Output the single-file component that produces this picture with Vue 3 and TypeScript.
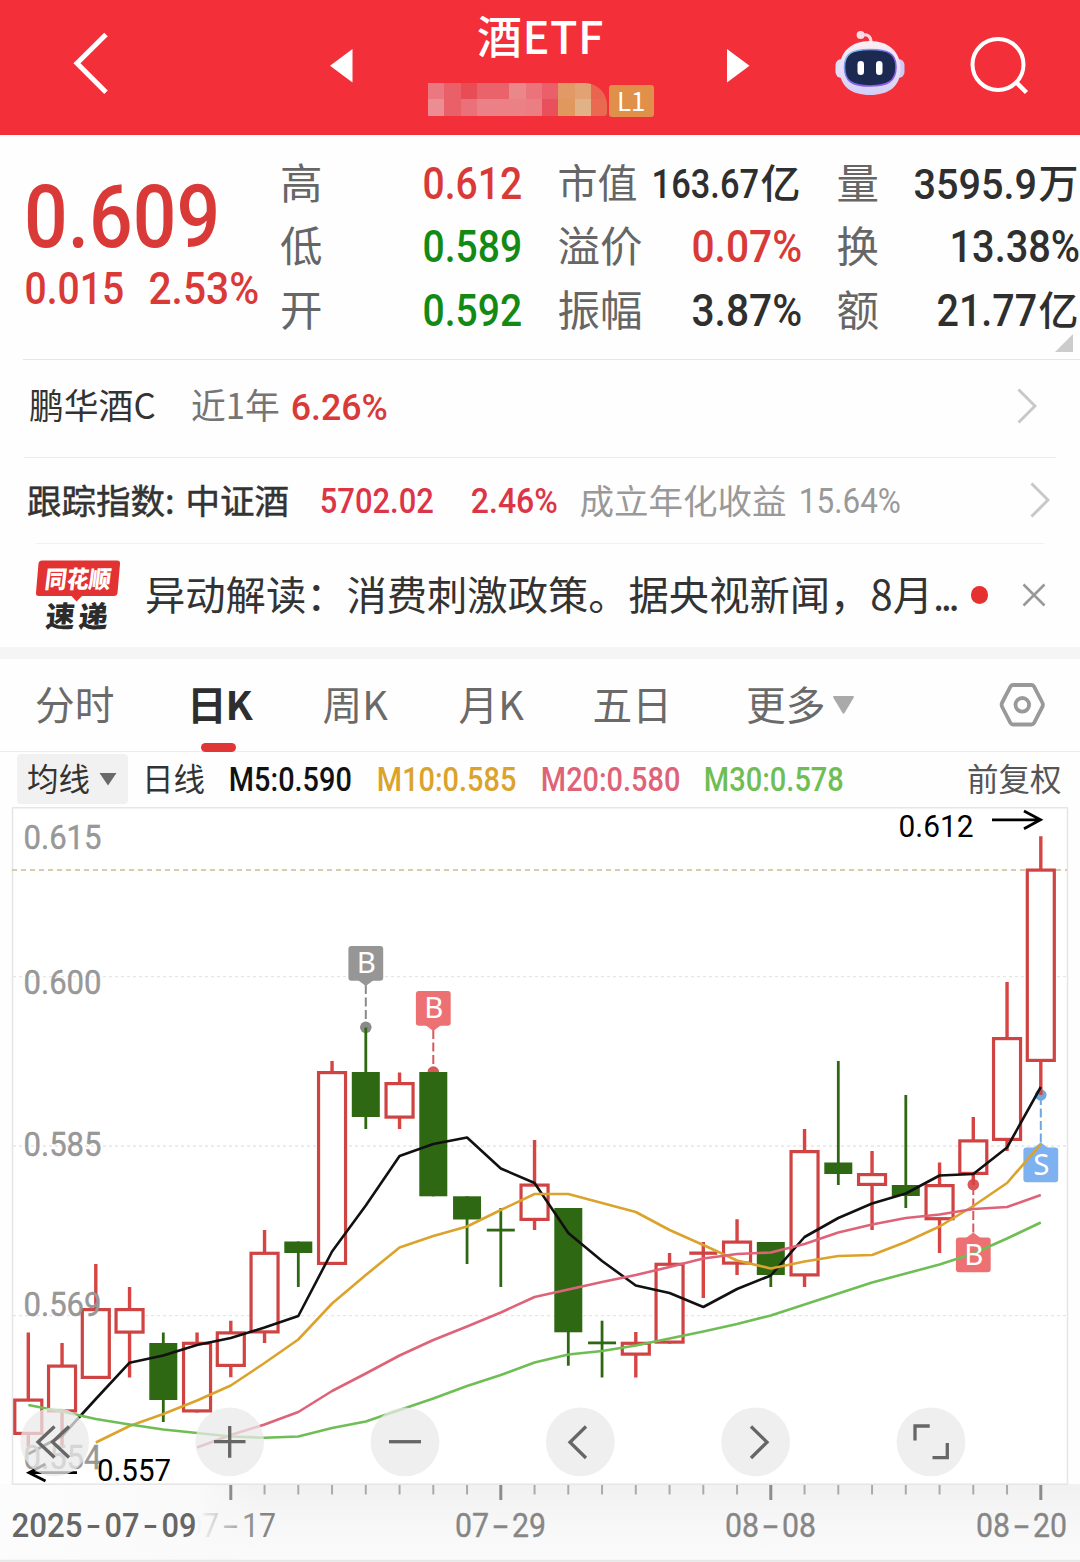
<script setup lang="ts">
import { h } from 'vue'

interface FitProps {
  t: string
  w: number
  s: number
  weight?: number
}

// Condensed numeric text: stretched to the given ink width, as tall as its digits.
const Num = (p: FitProps) =>
  h(
    'svg',
    {
      width: p.w,
      height: p.s * 0.711,
      style: { overflow: 'visible', display: 'block', flex: 'none', fill: 'currentColor' },
    },
    [
      h(
        'text',
        {
          x: -p.s * 0.035,
          y: p.s * 0.711,
          'font-family': 'Roboto, sans-serif',
          'font-size': p.s,
          'font-weight': p.weight ?? 500,
          textLength: p.w + p.s * 0.06,
          lengthAdjust: 'spacingAndGlyphs',
        },
        p.t,
      ),
    ],
  )
Num.props = ['t', 'w', 's', 'weight']

interface Cell {
  label: string
  value: string
  w: number
  s: number
  unit?: string
  tone: string
}

const columns: { name: string; cells: Cell[] }[] = [
  {
    name: 'c1',
    cells: [
      { label: '高', value: '0.612', w: 97, s: 44, tone: 'red' },
      { label: '低', value: '0.589', w: 97, s: 44, tone: 'green' },
      { label: '开', value: '0.592', w: 97, s: 44, tone: 'green' },
    ],
  },
  {
    name: 'c2',
    cells: [
      { label: '市值', value: '163.67', w: 105, s: 41, unit: '亿', tone: 'dark' },
      { label: '溢价', value: '0.07%', w: 108, s: 44, tone: 'red' },
      { label: '振幅', value: '3.87%', w: 108, s: 44, tone: 'dark' },
    ],
  },
  {
    name: 'c3',
    cells: [
      { label: '量', value: '3595.9', w: 121, s: 43, unit: '万', tone: 'dark' },
      { label: '换', value: '13.38%', w: 128, s: 44, tone: 'dark' },
      { label: '额', value: '21.77', w: 98, s: 44, unit: '亿', tone: 'dark' },
    ],
  },
]

const mosaic: string[] = [
  '#eb7780', '#ea6068', '#e84c54', '#ea626a', '#ea626a', '#eb868a', '#ea747a', '#ea5f69', '#e19a66', '#e2a274', '#e96550',
  '#eb8d92', '#ea6069', '#ea707a', '#eb8087', '#eb8085', '#eb8085', '#eb7e83', '#ea4f5c', '#e1985f', '#e2b287', '#e96a50',
]

const X0 = 28.3
const STEP = 33.75
const cx = (i: number): number => X0 + i * STEP

// [rising, high, top, bottom, low]
type Candle = [boolean, number, number, number, number]
const candles: Candle[] = [
  [true, 1332.5, 1398.5, 1435, 1447],
  [true, 1343, 1364.5, 1412.5, 1445],
  [true, 1264, 1308, 1379, 1379],
  [true, 1287, 1308, 1333.7, 1377.5],
  [false, 1332.5, 1343, 1400, 1422],
  [true, 1332.5, 1341.7, 1412.5, 1412.5],
  [true, 1320.7, 1331.3, 1367, 1377.3],
  [true, 1230, 1251.7, 1333.5, 1343],
  [false, 1241.5, 1241.5, 1253, 1287],
  [true, 1061, 1071, 1265, 1265],
  [false, 1027.5, 1072, 1117, 1129],
  [true, 1072.5, 1082, 1118.7, 1129],
  [false, 1072, 1072, 1196.3, 1196.3],
  [false, 1196.3, 1196.3, 1219.5, 1264],
  [false, 1208, 1228.7, 1231.5, 1287],
  [true, 1140, 1183.5, 1221, 1230],
  [false, 1208, 1208, 1332.3, 1365.7],
  [false, 1320.7, 1341.5, 1344.3, 1377.5],
  [true, 1332, 1341.7, 1355.7, 1377.5],
  [true, 1253, 1262.7, 1343.7, 1343.7],
  [true, 1242, 1251.5, 1254.8, 1298],
  [true, 1219.3, 1240.5, 1264.7, 1275],
  [false, 1242, 1242, 1275, 1287],
  [true, 1129, 1150, 1276.5, 1287],
  [false, 1061, 1162.5, 1174, 1185],
  [true, 1151, 1173, 1186, 1230],
  [false, 1095, 1185, 1196, 1208],
  [true, 1162.5, 1184, 1220.3, 1253],
  [true, 1117, 1139.3, 1175, 1185],
  [true, 982, 1037, 1141, 1151],
  [true, 836.3, 868.5, 1062, 1095],
]

const line = (start: number, ys: number[]): string => ys.map((y, k) => `${cx(start + k)},${y}`).join(' ')

const averages: { color: string; points: string }[] = [
  {
    color: '#111',
    points: line(0, [1454, 1436, 1399, 1362.7, 1355.5, 1345, 1338, 1327.5, 1316, 1251.5, 1205.5, 1156, 1144, 1137.5, 1168.5, 1183, 1233, 1261, 1285.5, 1293, 1307, 1289, 1275.5, 1237, 1218, 1203.5, 1193.5, 1175.5, 1174, 1147.5, 1087]),
  },
  {
    color: '#dba32c',
    points: line(2, [1442.5, 1426, 1414, 1400.5, 1385.5, 1363, 1339.5, 1303.5, 1275, 1247.5, 1236, 1226.5, 1210, 1194, 1194, 1203, 1212, 1230, 1245, 1260.5, 1268.5, 1261.5, 1256, 1255, 1242, 1226.5, 1206, 1183, 1144]),
  },
  {
    color: '#de6378',
    points: line(5, [1447.5, 1435, 1424.5, 1412, 1391, 1373.5, 1355.5, 1340, 1326.5, 1312.5, 1297, 1289.5, 1282, 1275, 1267, 1258.5, 1254, 1252.5, 1244, 1232.5, 1224.5, 1218, 1214.5, 1209, 1207, 1195]),
  },
  {
    color: '#6fbd55',
    points: line(0, [1405, 1411.5, 1419, 1424.5, 1429.5, 1433, 1436.5, 1437.7, 1436.5, 1428, 1421.5, 1410, 1398.5, 1386, 1375, 1362.5, 1354.5, 1351, 1345.5, 1338.5, 1331.5, 1324, 1315.5, 1304.5, 1293.5, 1282.5, 1273.5, 1264.5, 1253.5, 1238.5, 1222.5]),
  },
]

interface Marker {
  i: number
  letter: string
  y: number
  dot: number
  fill: string
  stroke: string
}
const markers: Marker[] = [
  { i: 10, letter: 'B', y: 946, dot: 1027.3, fill: '#969696', stroke: '#8a8a8a' },
  { i: 12, letter: 'B', y: 991, dot: 1072, fill: '#ed7173', stroke: '#d9585a' },
  { i: 28, letter: 'B', y: 1237.5, dot: 1184.7, fill: '#ed7173', stroke: '#d9585a' },
  { i: 30, letter: 'S', y: 1147.5, dot: 1095, fill: '#7db1ef', stroke: '#6fa8de' },
]
const below = (m: Marker): boolean => m.dot < m.y
const pointer = (m: Marker): string => {
  const x = cx(m.i)
  return below(m)
    ? `${x - 8},${m.y + 1} ${x},${m.y - 5} ${x + 8},${m.y + 1}`
    : `${x - 8},${m.y + 34} ${x},${m.y + 40} ${x + 8},${m.y + 34}`
}

const priceLabels: { t: string; y: number }[] = [
  { t: '0.615', y: 849 },
  { t: '0.600', y: 994 },
  { t: '0.585', y: 1155.5 },
  { t: '0.569', y: 1315.7 },
  { t: '0.554', y: 1469 },
]

const ticks: number[] = Array.from({ length: 25 }, (_, k) => k + 6)

const dates: { a: string; b: string; x: number }[] = [
  { a: '07', b: '29', x: 455 },
  { a: '08', b: '08', x: 725 },
  { a: '08', b: '20', x: 976 },
]

const buttons: { x: number; d: string }[] = [
  { x: 54.7, d: 'M54.5 1426.5L38 1442L54.5 1457.5M69 1426.5L52.5 1442L69 1457.5' },
  { x: 229.7, d: 'M214 1441.7H245.5M229.7 1426V1457.7' },
  { x: 405, d: 'M389 1441.7H421' },
  { x: 580.3, d: 'M586 1426.5L570 1442.2L586 1458' },
  { x: 755.6, d: 'M751 1426.5L767 1442.2L751 1458' },
  { x: 931, d: 'M929.7 1426H915V1440.5M932.5 1457.6H947.3V1443' },
]
</script>

<template>
  <div class="page">
    <header class="top">
      <svg class="back" width="40" height="66" viewBox="72 30 40 66">
        <path d="M106 34.5L77 63.3L106 92.3" fill="none" stroke="#fff" stroke-width="5" />
      </svg>
      <svg class="prev" width="24" height="34" viewBox="330 49 24 34"><path d="M352.500 49V82.500L330 65.800Z" fill="#fff" /></svg>
      <div class="heading">
        <div class="title">酒ETF</div>
        <div class="sub">
          <div class="mosaic">
            <i v-for="(c, k) in mosaic" :key="k" :style="{ background: c }"></i>
          </div>
          <span class="level">L1</span>
        </div>
      </div>
      <svg class="next" width="24" height="34" viewBox="727 49 24 34"><path d="M727 49V82.500L749.500 65.800Z" fill="#fff" /></svg>
      <svg class="robot" width="70" height="66" viewBox="835 30 70 66">
        <defs>
          <linearGradient id="shell" x1="0" y1="0" x2="0" y2="1">
            <stop offset="0" stop-color="#fdeef4" />
            <stop offset="0.6" stop-color="#e6dcf6" />
            <stop offset="1" stop-color="#d3cdf6" />
          </linearGradient>
          <linearGradient id="rim" x1="0" y1="0" x2="1" y2="1">
            <stop offset="0" stop-color="#7fd0ee" />
            <stop offset="0.5" stop-color="#7b62e6" />
            <stop offset="1" stop-color="#8d5cf0" />
          </linearGradient>
        </defs>
        <path d="M861 35.500C867 33.500 871 36 871 42" fill="none" stroke="#fbd9e2" stroke-width="3" />
        <circle cx="860.600" cy="35" r="4" fill="#fbdce5" />
        <rect x="835.500" y="59" width="12" height="19" rx="6" fill="#e3dcf7" />
        <rect x="892.500" y="59" width="12" height="19" rx="6" fill="#cfcaf4" />
        <path d="M870 41C889 41 900.500 52 900.500 69C900.500 86 889 95 870 95C851 95 839.500 86 839.500 69C839.500 52 851 41 870 41Z" fill="url(#shell)" />
        <path d="M870 49.500C889 49.500 896 54 896 67C896 81 888 86 870 86C852 86 844.500 81 844.500 67C844.500 54 851 49.500 870 49.500Z" fill="#1c2a52" stroke="url(#rim)" stroke-width="1.600" />
        <rect x="857.500" y="61" width="6.500" height="14" rx="3.250" fill="#fff" />
        <rect x="876" y="61" width="6.500" height="14" rx="3.250" fill="#fff" />
      </svg>
      <svg class="search" width="62" height="62" viewBox="968 35 62 62">
        <circle cx="998" cy="64.500" r="25.500" fill="none" stroke="#fff" stroke-width="4" />
        <path d="M1016 82L1026.500 92.500" stroke="#fff" stroke-width="4.500" />
      </svg>
    </header>

    <section class="quote">
      <div class="price">
        <Num class="red" t="0.609" :w="191" :s="87" />
        <div class="change red">
          <Num t="0.015" :w="97" :s="44" />
          <Num t="2.53%" :w="108" :s="44" />
        </div>
      </div>
      <div v-for="col in columns" :key="col.name" class="col" :class="col.name">
        <div v-for="c in col.cells" :key="c.label" class="cell">
          <span class="zh label">{{ c.label }}</span>
          <span class="value" :class="c.tone">
            <Num :t="c.value" :w="c.w" :s="c.s" /><span v-if="c.unit" class="zh unit">{{ c.unit }}</span>
          </span>
        </div>
      </div>
      <svg class="corner" width="18" height="18"><path d="M18 0V18H0Z" fill="#ccc" /></svg>
    </section>

    <section class="row fund">
      <span class="zh fundname">鹏华酒C</span>
      <span class="zh period">近1年</span>
      <Num class="red" t="6.26%" :w="95" :s="37.5" />
      <svg class="arrow a1" width="20" height="36"><path d="M1.500 1.500L18 18L1.500 34.500" /></svg>
    </section>

    <section class="row index">
      <span class="zh name">跟踪指数:</span>
      <span class="zh name target">中证酒</span>
      <Num class="rose n1" t="5702.02" :w="112" :s="34.5" />
      <Num class="rose n2" t="2.46%" :w="85" :s="34.5" />
      <span class="zh yearly">成立年化收益</span>
      <Num class="grey n3" t="15.64%" :w="100" :s="34.5" :weight="400" />
      <svg class="arrow a2" width="20" height="36"><path d="M1.500 1.500L18 18L1.500 34.500" /></svg>
    </section>

    <section class="row news">
      <svg class="brand" width="86" height="74" viewBox="35 558 86 74">
        <path d="M42 560.500H117Q120.500 560.500 120 564L117.500 593Q117 596 114 596H82L76.500 601.500L71.500 596H39Q35.500 596 36 592.500L38.500 563.500Q39 560.500 42 560.500Z" fill="#e23232" />
        <g font-family="Noto Sans CJK SC, sans-serif" font-weight="900">
          <text transform="translate(44 588) skewX(-7)" font-size="24" textLength="66" lengthAdjust="spacingAndGlyphs" fill="#fff">同花顺</text>
          <text transform="translate(45 626.500) skewX(-5)" font-size="29" textLength="62" lengthAdjust="spacing" fill="#2c2c2c">速递</text>
        </g>
      </svg>
      <span class="zh headline">异动解读：消费刺激政策。据央视新闻，8月<span class="dots">...</span></span>
      <i class="dot"></i>
      <svg class="close" width="24" height="24"><path d="M1.500 1.500L22.500 22.500M22.500 1.500L1.500 22.500" stroke="#999" stroke-width="2.600" /></svg>
    </section>

    <nav class="tabs">
      <span class="zh t1">分时</span>
      <span class="zh t2 on">日K</span>
      <span class="zh t3">周K</span>
      <span class="zh t4">月K</span>
      <span class="zh t5">五日</span>
      <span class="zh t6">更多</span>
      <svg class="more" width="21" height="18"><path d="M1 0H20Q21.500 0 20.500 2L11.500 17Q10.500 18.500 9.500 17L0.500 2Q-0.500 0 1 0Z" fill="#aaa" /></svg>
      <svg class="gear" width="46" height="46" viewBox="999 682 46 46">
        <path d="M1013 685H1031.500Q1033 685 1034 686.500L1042.300 702.500Q1043.500 704.800 1042.300 707L1034 723Q1033 724.500 1031.500 724.500H1013Q1011.500 724.500 1010.500 723L1002.200 707Q1001 704.800 1002.200 702.500L1010.500 686.500Q1011.500 685 1013 685Z" fill="none" stroke="#999" stroke-width="3.800" />
        <circle cx="1022.300" cy="704.800" r="6.800" fill="none" stroke="#999" stroke-width="3.800" />
      </svg>
    </nav>

    <section class="legend">
      <span class="pick"><span class="zh">均线</span><svg width="18" height="13"><path d="M0.500 0H17.500L9 12.500Z" fill="#6a6a6a" /></svg></span>
      <span class="zh daily">日线</span>
      <Num class="m5" t="M5:0.590" :w="121" :s="33" />
      <Num class="m10" t="M10:0.585" :w="137.500" :s="33" />
      <Num class="m20" t="M20:0.580" :w="137.500" :s="33" />
      <Num class="m30" t="M30:0.578" :w="138" :s="33" />
      <span class="zh adjust">前复权</span>
    </section>

    <svg class="chart" width="1080" height="755" viewBox="0 807 1080 755">
      <defs>
        <linearGradient id="axis" x1="0" y1="0" x2="0" y2="1">
          <stop offset="0" stop-color="#f1f1f1" />
          <stop offset="0.5" stop-color="#f7f7f7" />
          <stop offset="1" stop-color="#fbfbfb" />
        </linearGradient>
        <linearGradient id="fade" x1="0" y1="0" x2="1" y2="0">
          <stop offset="0" stop-color="#fcfcfc" />
          <stop offset="0.76" stop-color="#fafafa" />
          <stop offset="1" stop-color="#f8f8f8" stop-opacity="0" />
        </linearGradient>
      </defs>
      <rect x="0" y="1484" width="1080" height="78" fill="url(#axis)" />
      <text class="num" y="1536.500" font-size="34" fill="#858585">
        <tspan x="185" textLength="34" lengthAdjust="spacingAndGlyphs">07</tspan><tspan dx="4" textLength="15" lengthAdjust="spacingAndGlyphs">-</tspan><tspan dx="4" textLength="34" lengthAdjust="spacingAndGlyphs">17</tspan>
      </text>
      <rect x="0" y="1484" width="258" height="77" fill="url(#fade)" />
      <rect x="12.500" y="807.700" width="1055" height="676.500" fill="#fff" stroke="#e6e6e6" stroke-width="1.600" />
      <g stroke="#e6e6e6" stroke-width="1.300" stroke-dasharray="3 3">
        <path d="M13 976.700H1067M13 1146H1067M13 1315.700H1067" />
      </g>
      <path d="M12 869.900H1067" stroke="#c9bf8e" stroke-width="1.500" stroke-dasharray="5 4" />

      <g v-for="m in markers" :key="'m' + m.i">
        <path :d="`M${cx(m.i)} ${below(m) ? m.y - 5 : m.y + 39}V${m.dot}`" :stroke="m.stroke" stroke-width="2" stroke-dasharray="9 3.500" />
        <circle :cx="cx(m.i)" :cy="m.dot" r="5.800" :fill="m.stroke" />
        <rect :x="cx(m.i) - 17.400" :y="m.y" width="34.800" height="34.800" rx="3" :fill="m.fill" />
        <polygon :points="pointer(m)" :fill="m.fill" />
      </g>

      <g v-for="(c, i) in candles" :key="i">
        <template v-if="c[0]">
          <path :d="`M${cx(i)} ${c[1]}V${c[2] + 1}M${cx(i)} ${c[3] - 1}V${c[4]}`" stroke="#d64543" stroke-width="3.400" />
          <rect v-if="c[3] - c[2] > 5" :x="cx(i) - 13.500" :y="c[2] + 1.600" width="27" :height="c[3] - c[2] - 3.200" fill="#fff" stroke="#cf4342" stroke-width="3.200" />
          <rect v-else :x="cx(i) - 14" :y="c[2]" width="28" :height="c[3] - c[2]" fill="#cf4342" />
        </template>
        <template v-else>
          <path :d="`M${cx(i)} ${c[1]}V${c[4]}`" stroke="#2f6813" stroke-width="2.800" />
          <rect :x="cx(i) - 14" :y="c[2]" width="28" :height="c[3] - c[2]" fill="#2f6813" />
        </template>
      </g>

      <g fill="none" stroke-width="2.600" stroke-linejoin="round">
        <polyline v-for="a in averages" :key="a.color" :points="a.points" :stroke="a.color" />
      </g>

      <text v-for="m in markers" :key="'t' + m.i" class="letter" :x="cx(m.i) + 0.500" :y="m.y + 27" text-anchor="middle">{{ m.letter }}</text>

      <text v-for="p in priceLabels" :key="p.t" class="num label-y" x="23.500" :y="p.y" font-size="34" textLength="78" lengthAdjust="spacingAndGlyphs" fill="#999">{{ p.t }}</text>

      <g fill="none" stroke="#000" stroke-width="2.800">
        <path d="M992 819.800H1040M1024 811L1040.500 819.800L1024 828.800" />
        <path d="M77 1472.700H30M45.500 1464L29 1472.700L45.500 1481" />
      </g>
      <text class="num" x="898.500" y="836.500" font-size="30.500" textLength="75" lengthAdjust="spacingAndGlyphs">0.612</text>
      <text class="num" x="97" y="1481" font-size="30.500" textLength="74" lengthAdjust="spacingAndGlyphs">0.557</text>

      <g v-for="b in buttons" :key="b.x">
        <circle :cx="b.x" cy="1441.900" r="34.400" fill="#e9e9e9" fill-opacity="0.75" />
        <path :d="b.d" fill="none" stroke="#666" stroke-width="3.300" />
      </g>

      <path
        v-for="i in ticks"
        :key="'k' + i"
        :d="`M${cx(i)} 1485V${i % 8 === 6 ? 1500 : 1494.500}`"
        :stroke="i % 8 === 6 ? '#8c8c8c' : '#aaa'"
        :stroke-width="i % 8 === 6 ? 3 : 2"
      />
      <text v-for="(d, k) in dates" :key="'d' + k" class="num label-y" y="1536.500" font-size="34" fill="#858585">
        <tspan :x="d.x" textLength="34" lengthAdjust="spacingAndGlyphs">{{ d.a }}</tspan><tspan dx="4" textLength="15" lengthAdjust="spacingAndGlyphs">-</tspan><tspan dx="4" textLength="34" lengthAdjust="spacingAndGlyphs">{{ d.b }}</tspan>
      </text>
      <text class="num strong" y="1536.500" font-size="34" fill="#666">
        <tspan x="11.500" textLength="71" lengthAdjust="spacingAndGlyphs">2025</tspan><tspan dx="3.500" textLength="15" lengthAdjust="spacingAndGlyphs">-</tspan><tspan dx="3.500" textLength="35" lengthAdjust="spacingAndGlyphs">07</tspan><tspan dx="3.500" textLength="15" lengthAdjust="spacingAndGlyphs">-</tspan><tspan dx="3.500" textLength="35" lengthAdjust="spacingAndGlyphs">09</tspan>
      </text>
      <path d="M0 1560.800H1080" stroke="#e6e6e6" stroke-width="2" />
    </svg>
  </div>
</template>

<style>
body {
  background: #fff;
  overflow: hidden;
}
</style>

<style scoped>
.page {
  width: 1080px;
  height: 1562px;
  overflow: hidden;
  background: #fefefe;
  color: #333;
  font-family: 'Noto Sans CJK SC', sans-serif;
}
svg {
  display: block;
  flex: none;
}
.zh {
  flex: none;
  line-height: 1;
  margin-bottom: 0.07em;
  white-space: nowrap;
}
.red {
  color: #d93a38;
}
.green {
  color: #138a13;
}
.dark {
  color: #2f2f2f;
}
.rose {
  color: #dc3548;
}
.grey {
  color: #999;
}

.top {
  display: flex;
  align-items: flex-start;
  height: 135px;
  background: #f32f39;
}
.back {
  margin: 30px 0 0 72px;
}
.prev {
  margin: 49px 0 0 218px;
}
.heading {
  width: 226px;
  margin-left: 74px;
}
.title {
  height: 82.5px;
  box-sizing: border-box;
  padding: 8px 1px 0 0;
  color: #fff;
  font-size: 45px;
  font-weight: 500;
  letter-spacing: 0.5px;
  line-height: 54px;
  text-align: center;
}
.sub {
  display: flex;
  align-items: flex-start;
}
.mosaic {
  display: grid;
  grid-template-columns: repeat(11, 16.3px);
  grid-auto-rows: 16.5px;
  overflow: hidden;
  border-radius: 0 22px 3px 0;
}
.level {
  width: 45px;
  height: 32px;
  margin: 2px 0 0 1.5px;
  border-radius: 3px;
  background: #e09048;
  color: #fff;
  font-size: 26px;
  line-height: 29px;
  text-align: center;
}
.next {
  margin: 49px 0 0 73px;
}
.robot {
  margin: 30px 0 0 84px;
}
.search {
  margin: 35px 0 0 63px;
}

.quote {
  display: flex;
  position: relative;
  height: 224px;
}
.quote::after {
  content: '';
  position: absolute;
  right: 0;
  bottom: -1px;
  left: 23px;
  height: 1.5px;
  background: #e6e6e6;
}
.price {
  width: 280px;
  box-sizing: border-box;
  padding: 50px 0 0 27px;
}
.change {
  display: flex;
  gap: 27px;
  margin: 26px 0 0 -1.5px;
}
.col {
  padding-top: 17px;
}
.c1 {
  width: 240.5px;
}
.c2 {
  width: 243px;
  margin-left: 37px;
}
.c3 {
  width: 242px;
  margin-left: 36px;
}
.cell {
  display: flex;
  align-items: center;
  justify-content: space-between;
  height: 63.5px;
}
.label {
  margin-bottom: 0.14em;
  color: #666;
  font-size: 42.5px;
}
.c2 .cell:first-child .label {
  font-size: 40px;
}
.value {
  display: flex;
  align-items: center;
  margin-bottom: 1px;
}
.unit {
  margin: 0 0 0.13em 3px;
  font-size: 40px;
  font-weight: 500;
}
.corner {
  position: absolute;
  right: 7px;
  bottom: 7px;
}

.row {
  display: flex;
  align-items: center;
  position: relative;
  box-sizing: border-box;
}
.row::after {
  content: '';
  position: absolute;
  bottom: -1px;
  height: 1.5px;
}
.arrow {
  fill: none;
  stroke: #c8c8c8;
  stroke-width: 3;
}
.fund {
  height: 98px;
  padding: 0 0 4px 29px;
  font-size: 34.8px;
}
.fundname {
  width: 127px;
}
.fund::after {
  left: 24px;
  right: 24px;
  background: #ebebeb;
}
.period {
  width: 88px;
  margin: 0 13px 0.07em 35px;
  color: #757575;
}
.a1 {
  margin-left: 630px;
}
.index {
  height: 86px;
  padding: 0 0 0 27px;
  font-size: 34.5px;
}
.index::after {
  left: 36px;
  right: 36px;
  background: #f1f1f1;
}
.name {
  width: 158.5px;
  -webkit-text-stroke: 0.5px currentColor;
}
.target {
  width: 135px;
}
.n2 {
  margin-left: 39px;
}
.yearly {
  width: 207px;
  margin-left: 23px;
  color: #999;
}
.n3 {
  margin-left: 13px;
}
.a2 {
  margin-left: 130px;
}
.news {
  height: 104px;
  padding-left: 35px;
}
.headline {
  width: 818px;
  margin-left: 24px;
  font-size: 40.3px;
}
.dots {
  margin-left: 0;
  letter-spacing: -3.5px;
}
.dot {
  width: 17.5px;
  height: 17.5px;
  margin-left: 7.5px;
  border-radius: 50%;
  background: #e63131;
}
.close {
  margin-left: 34px;
}

.tabs {
  display: flex;
  align-items: center;
  position: relative;
  height: 92px;
  border-top: 12px solid #f5f5f5;
  border-bottom: 1.5px solid #ebebeb;
  color: #6a6a6a;
  font-size: 39.7px;
}
.t1 {
  width: 152px;
  margin-left: 35px;
}
.t2 {
  width: 135.5px;
}
.t2.on {
  color: #2e2e2e;
  font-weight: 700;
  letter-spacing: -1.2px;
}
.t2.on::after {
  content: '';
  position: absolute;
  bottom: -1px;
  left: 201px;
  width: 34.5px;
  height: 9px;
  border-radius: 4.5px;
  background: #e03636;
}
.t3 {
  width: 136px;
}
.t4 {
  width: 134px;
}
.t5 {
  width: 153.5px;
}
.t6 {
  width: 87px;
}
.tabs .zh {
  margin-bottom: 0.1em;
}
.gear {
  margin-left: 145px;
}

.legend {
  display: flex;
  align-items: center;
  height: 54.5px;
  padding-left: 17px;
  color: #333;
  font-size: 31.5px;
}
.pick {
  display: flex;
  align-items: center;
  width: 111px;
  height: 50px;
  box-sizing: border-box;
  padding-left: 10px;
  gap: 9px;
  border-radius: 4px;
  background: #f1f1f1;
}
.daily {
  width: 64px;
  margin-left: 14px;
}
.m5 {
  margin-left: 24px;
  color: #111;
}
.m10 {
  margin-left: 27px;
  color: #dba32c;
}
.m20 {
  margin-left: 26px;
  color: #de6378;
}
.m30 {
  margin-left: 26px;
  color: #6fbd55;
}
.adjust {
  margin-left: 124px;
  color: #555;
}

.letter {
  font-family: 'Noto Sans', sans-serif;
  font-size: 29.5px;
  fill: #fff;
}
.num {
  font-family: Roboto, sans-serif;
  font-weight: 400;
}
.label-y {
  stroke: currentColor;
  stroke: #8f8f8f;
  stroke-width: 0.4px;
}
.strong {
  font-weight: 500;
}
</style>
